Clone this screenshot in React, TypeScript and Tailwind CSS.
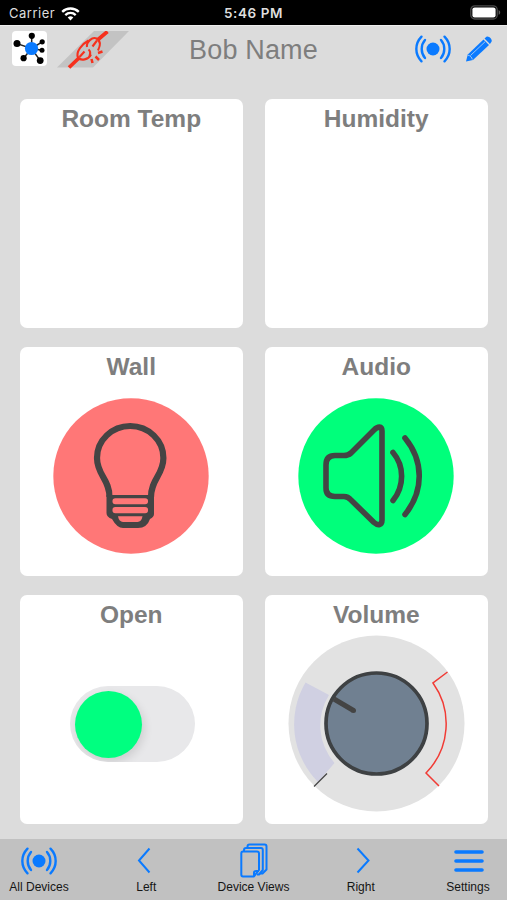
import type { ReactNode } from "react";

const BLUE = "#0a7aff";
const INK = "#444444";

function WifiIcon() {
  return (
    <svg width="19" height="14" viewBox="0 0 19 14" fill="none" stroke="#fff" strokeWidth="2.3">
      <path d="M1.2 4.9a11.8 11.8 0 0 1 16.6 0" />
      <path d="M4.3 8.1a7.4 7.4 0 0 1 10.4 0" />
      <path d="M9.5 13.4 6.7 10.6a4 4 0 0 1 5.6 0Z" fill="#fff" stroke="none" />
    </svg>
  );
}

function BatteryIcon() {
  return (
    <svg width="31" height="15" viewBox="0 0 31 15">
      <rect x="0.8" y="0.8" width="26.4" height="13.2" rx="4" fill="none" stroke="#4a4a4a" strokeWidth="1.3" />
      <rect x="2.4" y="2.4" width="23.2" height="10" rx="2.2" fill="#fff" />
      <path d="M28.6 5v4.8c1-.4 1.6-1.3 1.6-2.4s-.6-2-1.6-2.4Z" fill="#5a5a5a" />
    </svg>
  );
}

function HubIcon() {
  const nodes = [
    { x: 19.8, y: 4.8, r: 3.1 },
    { x: 5, y: 12.6, r: 3.5 },
    { x: 30.2, y: 10.8, r: 2.6 },
    { x: 30, y: 19.2, r: 2.5 },
    { x: 11.6, y: 27.2, r: 3.1 },
    { x: 28.2, y: 29.6, r: 3.4 },
  ];
  return (
    <svg width="35" height="35" viewBox="0 0 35 35">
      <rect width="35" height="35" rx="4" fill="#fff" />
      {nodes.map((n, i) => (
        <g key={i}>
          <path d={`M19.5 17.5L${n.x} ${n.y}`} stroke="#222" strokeWidth="1.5" />
          <circle cx={n.x} cy={n.y} r={n.r} fill="#000" />
        </g>
      ))}
      <circle cx="19.5" cy="17.5" r="6.6" fill={BLUE} />
    </svg>
  );
}

function BrokenLinkIcon() {
  return (
    <svg width="72" height="38" viewBox="0 0 72 38">
      <path d="M37 0H72L36 36.5H0Z" fill="#c3c3c3" />
      <g fill="none" stroke="#f6301d" strokeWidth="2.1">
        <path d="M50.500 0.5 40.5 9M22.500 26.500 12 36.500" strokeWidth="3.7" />
        <path d="M30 16C29 11 35.500 5.500 39.500 7.500C44 10 43 15.500 41 19.500" />
        <path d="M31.500 9.500C25 13 18.500 21 21 26.500C24 30.500 31.500 28.500 34 23.500" />
        <path d="M31.500 18.500C33.500 20 33.500 22.500 32.500 25M40 9.500 35.500 15.500M22.500 26 27.500 20.500" />
        <path d="M41 22 45.500 20.500M38.500 25.500 42 29M34.500 28 35.500 32" strokeWidth="2.5" />
      </g>
    </svg>
  );
}

function BroadcastIcon() {
  return (
    <svg width="36" height="28" viewBox="0 0 36 28" fill="none" stroke={BLUE} strokeWidth="2.4" strokeLinecap="round">
      <circle cx="18" cy="14" r="6.5" fill={BLUE} stroke="none" />
      <path d="M10 5C5.600 10 5.600 18 10 23M26 5C30.400 10 30.400 18 26 23" />
      <path d="M6.500 1.700C-.4 8.800-.4 19.200 6.500 26.300M29.500 1.700C36.400 8.800 36.400 19.200 29.500 26.300" />
    </svg>
  );
}

function PencilIcon() {
  return (
    <svg width="28" height="28" viewBox="0 0 28 28">
      <path d="M1 26.500 2.800 19.500 18.500 4.500 24 10 8 25Z" fill={BLUE} />
      <path d="M19.500 3.600 21.500 1.800C23.500.6 27.800 4.500 26.500 6.800L24.900 9Z" fill={BLUE} />
      <path d="M5.500 20.500 20 6.800" stroke="#a9cdf5" strokeWidth="0.9" fill="none" />
      <path d="M3 20.200C5.200 20.500 7 22.500 7.300 24.500" stroke="#a9cdf5" strokeWidth="0.9" fill="none" />
    </svg>
  );
}

function BulbIcon() {
  return (
    <svg width="156" height="156" viewBox="0 0 156 156">
      <circle cx="78" cy="78" r="77.700" fill="#ff7777" />
      <path
        d="M56.500 99C56.500 81 44 77 44 60A33.200 32 0 0 1 110.400 60C110.400 77 98 81 98 99"
        fill="none"
        stroke={INK}
        strokeWidth="6.200"
      />
      {/* screw base */}
      <path d="M53.500 97H101V116Q101 119 97 121Q94 130 85 130H70Q64 130 59 121Q53.500 119 53.500 115Z" fill={INK} />
      <rect x="59.500" y="100.300" width="35.500" height="6" rx="2.800" fill="#ff7777" />
      <rect x="59.500" y="109" width="35.500" height="6.300" rx="2.800" fill="#ff7777" />
      <path d="M65 118.300H89.500Q88.500 124 84.500 124H70Q66 124 65 118.300Z" fill="#ff7777" />
      <path d="M59.800 92H94.800V97H59.800Z" fill="#ff7777" />
    </svg>
  );
}

function SpeakerIcon() {
  return (
    <svg width="156" height="156" viewBox="0 0 156 156" fill="none" stroke={INK} strokeWidth="5.600" strokeLinecap="round">
      <circle cx="78" cy="78" r="77.700" fill="#00ff7b" stroke="none" />
      <path
        d="M84 33V122C84 127 80 128 76 124.500L53 102Q50 98.500 46 98.500H37Q28 98.500 28 90V67Q28 57.500 37 57.500H46Q50 57.500 53 55L76 32C80 28 84 28 84 33Z"
        strokeLinejoin="round"
      />
      <path d="M95 54.500C106.500 68 106.500 88 95 102.500M107 40C126 63 126 93 107 116.500" />
    </svg>
  );
}

function VolumeKnob() {
  return (
    <svg width="178" height="178" viewBox="0 0 178 178">
      <circle cx="88.500" cy="88.500" r="88" fill="#e2e2e2" />
      {/* swept range */}
      <path d="M17.500 47.500A82 82 0 0 0 30 147L46.500 128A57 57 0 0 1 41 60Z" fill="#d0d0e2" />
      <path d="M26 151.500 39 138.500" stroke="#444" strokeWidth="1.300" />
      {/* red limit */}
      <path d="M159.500 37 145 48A70 70 0 0 1 138 138L151 151" fill="none" stroke="#f13b35" strokeWidth="1.500" />
      <circle cx="88.500" cy="88.500" r="50.500" fill="#708091" stroke="#3e4143" strokeWidth="3.700" />
      <path d="M46 64 65.500 75.500" stroke="#444" strokeWidth="5" />
      <circle cx="65.500" cy="75.500" r="2.500" fill="#444" />
    </svg>
  );
}

function ChevronIcon({ right = false }: { right?: boolean }) {
  return (
    <svg width="18" height="28" viewBox="0 0 18 28" fill="none" stroke={BLUE} strokeWidth="2">
      <path d={right ? "M5.500 1.500 16.500 13.500 5.500 25.500" : "M12.500 1.500 2 13.500 12.500 25.500"} />
    </svg>
  );
}

function PagesIcon() {
  return (
    <svg width="28" height="36" viewBox="0 0 28 36" fill="none" stroke={BLUE} strokeWidth="2" strokeLinejoin="round">
      <path d="M3 8.500H17Q19 8.500 19 10.500V27L14 33.500H3Q1.300 33.500 1.300 31.500V10.500Q1.300 8.500 3 8.500Z" />
      <path d="M14 33V29.500Q14 28 16 28H19" />
      <path d="M4 8.500V7Q4 5 6 5H21Q22.800 5 22.800 7V27L19 31.500H17" />
      <path d="M7.500 5V3.500Q7.500 1.500 9.500 1.500H24.700Q26.500 1.500 26.500 3.500V26.500L22.500 30.500H20" />
    </svg>
  );
}

function MenuIcon() {
  return (
    <svg width="32" height="24" viewBox="0 0 32 24" stroke={BLUE} strokeWidth="3.600" strokeLinecap="round">
      <path d="M4 3H30M4 12H30M4 21H30" />
    </svg>
  );
}

function Card({ title, children }: { title: string; children?: ReactNode }) {
  return (
    <section className="flex flex-col items-center overflow-hidden rounded-[7px] bg-white">
      <h2 className="mt-[5px] h-7 text-[24.500px] leading-[29px] font-bold whitespace-nowrap text-[#7e7e7e]">{title}</h2>
      {children}
    </section>
  );
}

function Tab({ label, children }: { label: string; children: ReactNode }) {
  return (
    <button className="flex w-[78px] flex-col items-center">
      <span className="flex h-[41px] items-center justify-center pt-[3px]">{children}</span>
      <span className="text-[12px] leading-[14px] whitespace-nowrap text-[#151515]">{label}</span>
    </button>
  );
}

export default function App() {
  return (
    <div className="flex h-[900px] w-[507px] flex-col overflow-hidden bg-[#dcdcdc] font-['Liberation_Sans',sans-serif]">
      <div className="grid h-[25px] shrink-0 grid-cols-3 items-center bg-black text-[13px] text-[#dedede]">
        <div className="flex items-center gap-1.5 pt-0.5 pl-[9px] font-[Inter,sans-serif] tracking-[0.500px]">
          <span>Carrier</span>
          <WifiIcon />
        </div>
        <span className="pt-0.5 text-center font-[Inter,sans-serif] text-[13.500px] font-semibold tracking-[0.600px]">
          5:46 PM
        </span>
        <div className="flex justify-end pr-[6px]">
          <BatteryIcon />
        </div>
      </div>

      <header className="grid h-[74px] shrink-0 grid-cols-3 items-start border-t border-[#ededed]">
        <div className="flex items-start gap-2.5 pt-[5px] pl-3">
          <HubIcon />
          <BrokenLinkIcon />
        </div>
        <h1 className="pt-[7px] text-center text-[27px] leading-[34px] tracking-[0.150px] text-[#7e7e7e]">Bob Name</h1>
        <div className="flex items-center justify-end gap-[14px] pt-[9px] pr-[14px]">
          <BroadcastIcon />
          <PencilIcon />
        </div>
      </header>

      <main className="grid h-[725px] shrink-0 grid-cols-2 grid-rows-3 gap-x-[22.500px] gap-y-[19.500px] pr-[19.500px] pl-5">
        <Card title="Room Temp" />
        <Card title="Humidity" />
        <Card title="Wall">
          <div className="mt-[18px]">
            <BulbIcon />
          </div>
        </Card>
        <Card title="Audio">
          <div className="mt-[18px]">
            <SpeakerIcon />
          </div>
        </Card>
        <Card title="Open">
          <button className="mt-[58px] ml-[2px] flex h-[76px] w-[125px] items-center overflow-hidden rounded-full bg-[#e8e8ea] pl-[5px]">
            <span className="h-[67px] w-[67px] rounded-full bg-[#00ff80] shadow-[2px_4px_10px_rgba(0,0,0,0.12)]" />
          </button>
        </Card>
        <Card title="Volume">
          <div className="mt-[7px] ml-px">
            <VolumeKnob />
          </div>
        </Card>
      </main>

      <nav className="mt-auto flex h-[61px] items-start justify-between bg-[#c1c1c1]">
        <Tab label="All Devices">
          <BroadcastIcon />
        </Tab>
        <Tab label="Left">
          <ChevronIcon />
        </Tab>
        <Tab label="Device Views">
          <PagesIcon />
        </Tab>
        <Tab label="Right">
          <ChevronIcon right />
        </Tab>
        <Tab label="Settings">
          <MenuIcon />
        </Tab>
      </nav>
    </div>
  );
}
